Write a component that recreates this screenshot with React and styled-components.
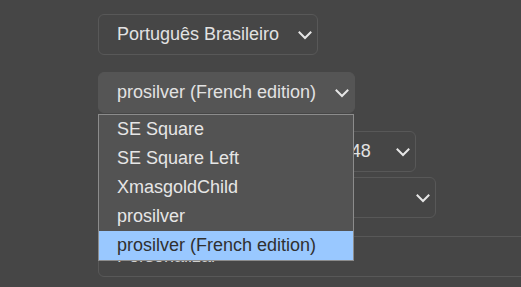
import React from "react";
import styled, { createGlobalStyle } from "styled-components";

const Global = createGlobalStyle`
  html, body { margin: 0; padding: 0; background: #464646; }
  body { font-family: "Liberation Sans", Arial, sans-serif; overflow: hidden; }
`;

const Page = styled.div`
  width: 521px;
  height: 287px;
  overflow: hidden;
  padding: 14px 0 0 98px;
  box-sizing: border-box;
  display: flex;
  flex-direction: column;
  align-items: flex-start;
`;

const Field = styled.div`
  position: relative;
  margin-top: ${(p) => p.$gap || 0}px;
  z-index: ${(p) => (p.$open ? 2 : 1)};
`;

const SelectBox = styled.div`
  box-sizing: border-box;
  height: 41px;
  width: ${(p) => p.$w}px;
  display: flex;
  align-items: center;
  justify-content: space-between;
  padding: 0 5px 0 18px;
  border: 1px solid ${(p) => (p.$open ? "#555555" : "#585858")};
  border-radius: 6px;
  background: ${(p) => (p.$open ? "#555555" : "#464646")};
  color: #e2e2e2;
  font-size: 18px;
  white-space: nowrap;
`;

const Label = styled.span`
  overflow: hidden;
`;

const Chevron = () => (
  <svg width="14" height="14" viewBox="0 0 14 14" style={{ flex: "none" }}>
    <path d="M1.5 4.5 L7 10 L12.5 4.5" fill="none" stroke="#e6e6e6" strokeWidth="2" strokeLinecap="square" />
  </svg>
);

const List = styled.ul`
  position: absolute;
  top: 42px;
  left: 0;
  width: 256px;
  box-sizing: border-box;
  margin: 0;
  padding: 0;
  list-style: none;
  background: #535353;
  border: 1px solid #8c8c8c;
`;

const Option = styled.li`
  height: 29px;
  line-height: 29px;
  padding-left: 18px;
  font-size: 18px;
  white-space: nowrap;
  color: ${(p) => (p.$active ? "#303030" : "#e6e6e6")};
  background: ${(p) => (p.$active ? "#99c8ff" : "transparent")};
`;

const TextInput = styled.div`
  box-sizing: border-box;
  height: 41px;
  width: 460px;
  border: 1px solid #585858;
  border-radius: 6px;
  display: flex;
  align-items: center;
  padding: 0 18px;
  color: #cfcfcf;
  font-size: 18px;
`;

const Select = ({ w, text, open }) => (
  <SelectBox $w={w} $open={open}>
    <Label>{text}</Label>
    <Chevron />
  </SelectBox>
);

export default function App() {
  const styles = ["SE Square", "SE Square Left", "XmasgoldChild", "prosilver", "prosilver (French edition)"];
  return (
    <>
      <Global />
      <Page>
        <Field>
          <Select w={220} text="Português Brasileiro" />
        </Field>
        <Field $gap={17} $open>
          <Select w={257} text="prosilver (French edition)" open />
          <List>
            {styles.map((s, i) => (
              <Option key={s} $active={i === styles.length - 1}>{s}</Option>
            ))}
          </List>
        </Field>
        <Field $gap={18}>
          <Select w={318} text="Quarta-feira Jan 15, 2025 11:48" />
        </Field>
        <Field $gap={5}>
          <Select w={338} text="Brasília" />
        </Field>
        <Field $gap={18}>
          <TextInput>Personalizar</TextInput>
        </Field>
      </Page>
    </>
  );
}
